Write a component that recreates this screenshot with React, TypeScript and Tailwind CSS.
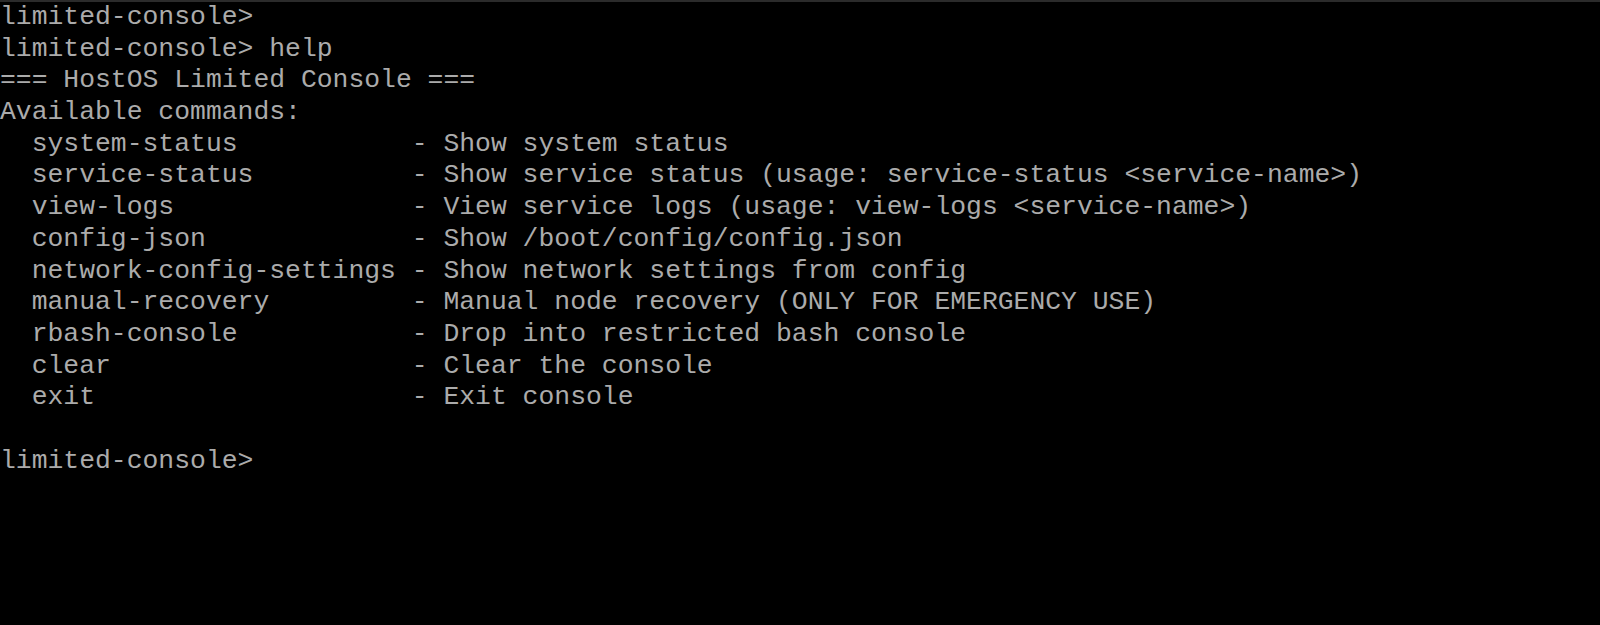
const COMMANDS = [
  { name: "system-status", desc: "Show system status" },
  { name: "service-status", desc: "Show service status (usage: service-status <service-name>)" },
  { name: "view-logs", desc: "View service logs (usage: view-logs <service-name>)" },
  { name: "config-json", desc: "Show /boot/config/config.json" },
  { name: "network-config-settings", desc: "Show network settings from config" },
  { name: "manual-recovery", desc: "Manual node recovery (ONLY FOR EMERGENCY USE)" },
  { name: "rbash-console", desc: "Drop into restricted bash console" },
  { name: "clear", desc: "Clear the console" },
  { name: "exit", desc: "Exit console" },
];

const PROMPT = "limited-console>";

export default function App() {
  const lines = [
    PROMPT,
    `${PROMPT} help`,
    "=== HostOS Limited Console ===",
    "Available commands:",
    ...COMMANDS.map((c) => `  ${c.name.padEnd(24, " ")}- ${c.desc}`),
    "",
    PROMPT,
  ];

  return (
    <div className="w-[1600px] h-[625px] bg-black border-t-2 border-[#2b2b2b] overflow-hidden">
      <div className="font-['Liberation_Mono',monospace] text-[26.4px] leading-[31.7px] text-[#ababab] whitespace-pre">
        {lines.map((line, i) => (
          <div key={i} className="h-[31.7px]">
            {line}
          </div>
        ))}
      </div>
    </div>
  );
}
